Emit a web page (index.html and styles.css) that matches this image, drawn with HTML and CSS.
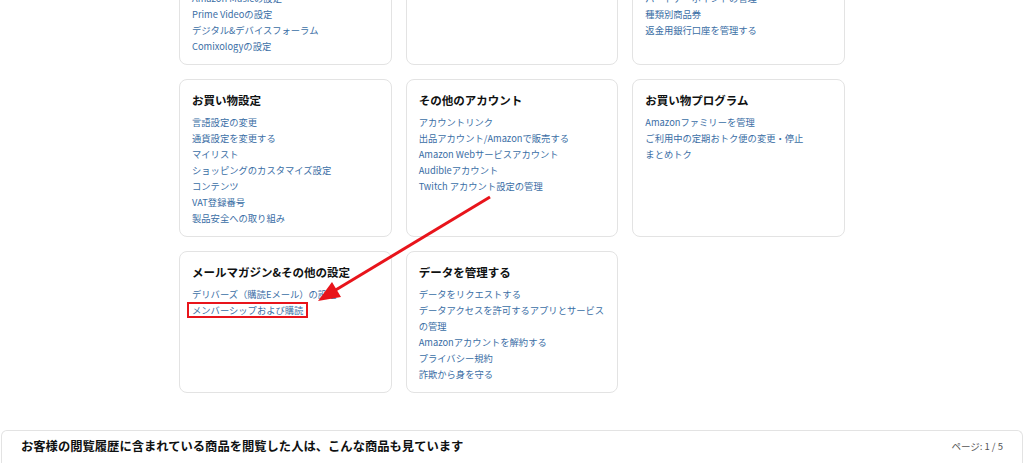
FILE: index.html
```html
<!DOCTYPE html>
<html lang="ja">
<head>
	<meta charset="utf-8">
	<title>アカウントサービス</title>
	<link rel="stylesheet" href="styles.css">
</head>
<body>
	<div class="page">
		<div class="card-grid">
			<div class="card">
				<h2>デジタルコンテンツとデバイス</h2>
				<a href="#">コンテンツと端末の管理</a>
				<a href="#">アプリライブラリと端末の管理</a>
				<a href="#">Amazon Musicの設定</a>
				<a href="#">Prime Videoの設定</a>
				<a href="#">デジタル&amp;デバイスフォーラム</a>
				<a href="#">Comixologyの設定</a>
			</div>
			<div class="card">
				<h2>支払い方法</h2>
				<a href="#">お支払い方法の管理</a>
				<a href="#">Amazonポイント</a>
			</div>
			<div class="card">
				<h2>ギフトカード</h2>
				<a href="#">ギフトカード残高</a>
				<a href="#">ギフトカードの登録</a>
				<a href="#">パートナーポイントの管理</a>
				<a href="#">種類別商品券</a>
				<a href="#">返金用銀行口座を管理する</a>
			</div>

			<div class="card">
				<h2>お買い物設定</h2>
				<a href="#">言語設定の変更</a>
				<a href="#">通貨設定を変更する</a>
				<a href="#">マイリスト</a>
				<a href="#">ショッピングのカスタマイズ設定</a>
				<a href="#">コンテンツ</a>
				<a href="#">VAT登録番号</a>
				<a href="#">製品安全への取り組み</a>
			</div>
			<div class="card">
				<h2>その他のアカウント</h2>
				<a href="#">アカウントリンク</a>
				<a href="#">出品アカウント/Amazonで販売する</a>
				<a href="#">Amazon Webサービスアカウント</a>
				<a href="#">Audibleアカウント</a>
				<a href="#">Twitch アカウント設定の管理</a>
			</div>
			<div class="card">
				<h2>お買い物プログラム</h2>
				<a href="#">Amazonファミリーを管理</a>
				<a href="#">ご利用中の定期おトク便の変更・停止</a>
				<a href="#">まとめトク</a>
			</div>

			<div class="card">
				<h2>メールマガジン&amp;その他の設定</h2>
				<a href="#">デリバーズ（購読Eメール）の設定</a>
				<a href="#"><span class="marked">メンバーシップおよび購読</span></a>
			</div>
			<div class="card">
				<h2>データを管理する</h2>
				<a href="#">データをリクエストする</a>
				<a href="#">データアクセスを許可するアプリとサービスの管理</a>
				<a href="#">Amazonアカウントを解約する</a>
				<a href="#">プライバシー規約</a>
				<a href="#">詐欺から身を守る</a>
			</div>
		</div>

		<div class="viewed">
			<h3>お客様の閲覧履歴に含まれている商品を閲覧した人は、こんな商品も見ています</h3>
			<span class="pager">ページ: 1 / 5</span>
		</div>

		<svg class="arrow" width="1024" height="463" viewBox="0 0 1024 463">
			<line x1="490" y1="197" x2="334" y2="291" stroke="#e8141b" stroke-width="3"/>
			<polygon points="318,301 341,297 332,282" fill="#e8141b"/>
		</svg>
	</div>
</body>
</html>
```

FILE: styles.css
```css
* {
	box-sizing: border-box;
	margin: 0;
	padding: 0;
}

body {
	font-family: "Noto Sans CJK JP", "Noto Sans", sans-serif;
	background-color: #fff;
	color: #0f1111;
}

.page {
	position: relative;
	width: 1024px;
	height: 463px;
	overflow: hidden;
}

.card-grid {
	width: 666px;
	margin: -77px auto 0;
	display: grid;
	grid-template-columns: repeat(3, 1fr);
	gap: 14px;
}

.card {
	border: 1px solid #e3e3e3;
	border-radius: 8px;
	padding: 10px 12px 10px 12px;
	display: flex;
	flex-direction: column;
	align-items: flex-start;
}

.card h2 {
	font-size: 11.5px;
	font-weight: bold;
	line-height: 20px;
	margin-bottom: 4px;
	color: #0f1111;
}

.card a {
	font-size: 9.3px;
	line-height: 16px;
	color: #3a6ea5;
	text-decoration: none;
}

.marked {
	display: inline-block;
	border: 2px solid #e8141b;
	margin-left: -5px;
	padding: 0 3px;
	line-height: 12px;
}

.viewed {
	margin: 37px 1px 0;
	border: 1px solid #e3e3e3;
	border-bottom: none;
	border-radius: 6px 6px 0 0;
	padding: 5px 19px 10px 19px;
	display: flex;
	justify-content: space-between;
	align-items: center;
}

.viewed h3 {
	font-size: 12.3px;
	font-weight: bold;
	line-height: 20px;
	color: #0f1111;
}

.pager {
	font-size: 9.5px;
	color: #555;
}

.arrow {
	position: absolute;
	top: 0;
	left: 0;
	pointer-events: none;
}
```
